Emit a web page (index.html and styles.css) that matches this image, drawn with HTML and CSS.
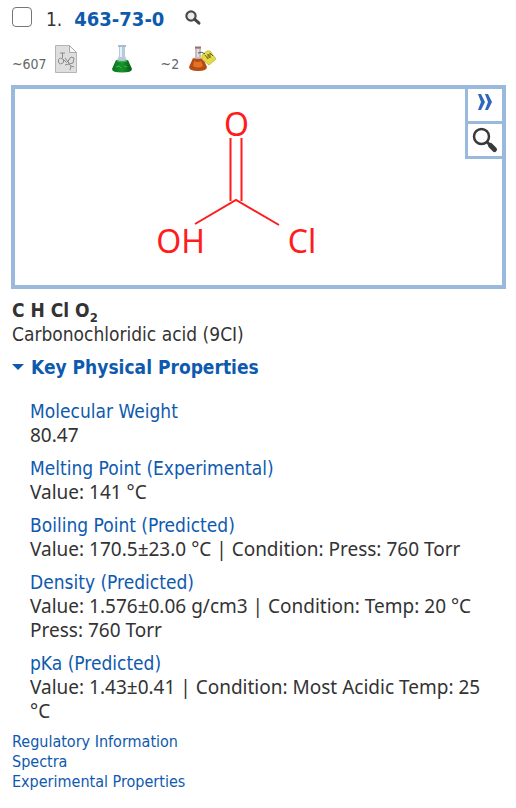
FILE: index.html
```
<!DOCTYPE html>
<html lang="en">
<head>
<meta charset="utf-8">
<meta name="viewport" content="width=device-width, initial-scale=1">
<title>463-73-0</title>
<link rel="stylesheet" href="styles.css">
</head>
<body>
<main class="record">
  <header class="heading">
    <input class="pick" type="checkbox" id="pick" aria-label="Select 463-73-0">
    <label class="index" for="pick">1.</label>
    <a class="registry" href="#">463-73-0</a>
    <button class="icon-button" type="button" aria-label="Quick view">
      <svg width="18" height="18" viewBox="0 0 18 18"><circle cx="7" cy="7" r="4.6" fill="#e8ecef" stroke="#4a4a4a" stroke-width="2.2"/><path d="M10.5 10.2l4.5 4" stroke="#444" stroke-width="3" stroke-linecap="round"/></svg>
    </button>
  </header>

  <div class="sources">
    <a class="source" href="#" aria-label="About 607 references">
      <span>~607</span>
      <svg width="22" height="28" viewBox="0 0 22 28"><path d="M.5.5h14l7 7v20H.5z" fill="#dedede" stroke="#b5b5b5"/><path d="M14.5.5v7h7z" fill="#f5f5f5" stroke="#aaa"/><g fill="none" stroke="#8a8a8a"><path d="M7.5 8v5M5 8h5M3.500 14.500l2-1.500 3 1.500v3l-3 1.500-2-1.500zM8.500 14.500l3 3 3-3M10 13l3 4M13 16l3-4 3 1-1 5-4 1zM14 19l-4 1M14 19l2 2-1 4M16 21l3 1"/></g></svg>
    </a>
    <a class="source" href="#" aria-label="Reactions">
      <svg width="22" height="28" viewBox="0 0 22 28"><defs><linearGradient id="green"><stop stop-color="#0a6f1d"/><stop offset=".5" stop-color="#16952b"/><stop offset="1" stop-color="#075b12"/></linearGradient></defs><path d="M8 1h6v10l6 12H2l6-12z" fill="#b8c9da"/><path d="M7 1h8" stroke="#a9bccd" stroke-width="2"/><path d="M10 2v10" stroke="#e6f0fa" stroke-width="2"/><path d="M5 15q6 2 12 0l4 9q0 3.500-10 3.500t-10-3.500z" fill="url(#green)"/><path d="M6 16q5 2 10 0" fill="none" stroke="#42b94d"/><path d="M5 22l3-1 2 2M13 21l3 1" fill="none" stroke="#39ba49"/></svg>
    </a>
    <a class="source supplier" href="#" aria-label="About 2 suppliers">
      <span>~2</span>
      <svg width="28" height="28" viewBox="0 0 28 28"><path d="M6 3h6v9l5 10H1l5-10z" fill="#c8bdba"/><path d="M6 2.500h6" stroke="#96726a" stroke-width="2"/><path d="M9 4v8" stroke="#e4dddd" stroke-width="2"/><path d="M4 13q5 2 10 0l4 9q0 4-9 4t-9-4z" fill="#b84a13"/><path d="M5 16q4 2 7 0l2 5q-5 3-10 0z" fill="#e17324"/><path d="M13 10l5-4h3l6 8-7 6-7-6z" fill="#e5da43" stroke="#c8be4f"/><path d="M9 8q4-2 7 1" fill="none" stroke="#555"/><path d="M16 10l3 4 0-5 2 4 0-5 3 3" fill="none" stroke="#706b23"/></svg>
    </a>
  </div>

  <section class="structure" aria-label="Structure">
    <svg class="molecule" width="162" height="150" viewBox="0 0 162 150" role="img" aria-label="Carbonochloridic acid">
      <g fill="none" stroke="#ff1c1c" stroke-width="2"><path d="M74.500 29v63M85.500 29v63M39 115l41-24 43 25"/></g>
      <g class="atoms"><text x="80.500" y="27">O</text><text x="24.500" y="144">OH</text><text x="146" y="144">Cl</text></g>
    </svg>
    <div class="tools">
      <button class="tool" type="button" aria-label="More options"><svg width="16" height="18" viewBox="0 0 16 18"><path d="M1 1h3l4 8-4 8H1l3-8zM8 1h3l4 8-4 8H8l3-8z" fill="#2e68bd"/></svg></button>
      <button class="tool" type="button" aria-label="Enlarge structure"><svg width="28" height="28" viewBox="0 0 28 28"><circle cx="10.500" cy="10.500" r="7.500" fill="#fff" stroke="#393939" stroke-width="2.500"/><path d="M16 16l4 4" stroke="#393939" stroke-width="3"/><path d="M19.500 19.500l4 4" stroke="#393939" stroke-width="5" stroke-linecap="round"/></svg></button>
    </div>
  </section>

  <div class="formula">C H Cl O<sub>2</sub></div>
  <div>Carbonochloridic acid (9CI)</div>

  <button class="toggle" type="button" aria-expanded="true"><span class="arrow"></span>Key Physical Properties</button>
  <dl class="properties">
    <div><dt>Molecular Weight</dt><dd>80.47</dd></div>
    <div><dt>Melting Point (Experimental)</dt><dd>Value: 141 °C</dd></div>
    <div><dt>Boiling Point (Predicted)</dt><dd>Value: 170.5±23.0 °C | Condition: Press: 760 Torr</dd></div>
    <div><dt>Density (Predicted)</dt><dd>Value: 1.576±0.06 g/cm3 | Condition: Temp: 20 °C Press: 760 Torr</dd></div>
    <div><dt>pKa (Predicted)</dt><dd>Value: 1.43±0.41 | Condition: Most Acidic Temp: 25 °C</dd></div>
  </dl>
  <nav class="links">
    <a href="#">Regulatory Information</a>
    <a href="#">Spectra</a>
    <a href="#">Experimental Properties</a>
  </nav>
</main>
</body>
</html>
```
FILE: styles.css
```
* { box-sizing: border-box; }
body {
  margin: 0;
  background: #fff;
  color: #333;
  font: 19px/24px Tahoma, "DejaVu Sans Condensed", sans-serif;
}
a { color: #0e5aae; text-decoration: none; }
button {
  margin: 0;
  padding: 0;
  border: 0;
  background: none;
  color: inherit;
  font: inherit;
}
svg { display: block; }
.record { padding: 6px 10px 12px 12px; }
.heading { display: flex; align-items: center; height: 26px; }
.pick {
  appearance: none;
  width: 20px;
  height: 20px;
  margin: 0 14px 4px 0;
  border: 1px solid #767676;
  border-radius: 4px;
  background: #fff;
}
.pick:checked { background: #0e5aae; }
.index { margin-right: 12px; }
.registry { font-size: 20px; font-weight: bold; }
.icon-button { margin: 0 0 2px 20px; }
.sources { display: flex; gap: 34px; height: 53px; padding-top: 13px; }
.source {
  display: flex;
  gap: 8px;
  height: 28px;
  color: #666;
  font-size: 14px;
  line-height: 38px;
}
.supplier { gap: 10px; margin-left: -6px; }
.structure {
  position: relative;
  display: flex;
  justify-content: center;
  height: 204px;
  margin-left: -1px;
  padding: 20px 44px 0 0;
  border: 4px solid #99badd;
}
.molecule { overflow: visible; }
.atoms {
  fill: #ff1c1c;
  font: 32px "Noto Sans", sans-serif;
  text-anchor: middle;
}
.tools {
  position: absolute;
  top: 0;
  right: 0;
  border-left: 3px solid #99badd;
}
.tool {
  display: flex;
  align-items: center;
  justify-content: center;
  width: 34px;
  height: 35px;
  border-bottom: 3px solid #99badd;
}
.tool:first-child { padding-bottom: 6px; }
.formula { margin-top: 9px; font-weight: bold; }
.formula sub { font-size: 13px; line-height: 0; }
.toggle {
  display: flex;
  align-items: center;
  margin: 9px 0 20px;
  color: #0e5aae;
  font-weight: bold;
}
.arrow {
  width: 12px;
  margin-right: 7px;
  border: 6px solid transparent;
  border-top-color: #0e5aae;
  border-bottom: 0;
}
.properties { display: grid; gap: 9px; margin: 0 20px 9px 18px; }
.properties dt { color: #0e5aae; }
.properties dd { margin: 0; font-family: Tahoma, "Noto Sans", sans-serif; }
.links {
  display: flex;
  flex-direction: column;
  align-items: flex-start;
  font-size: 16px;
  line-height: 20px;
}
```
